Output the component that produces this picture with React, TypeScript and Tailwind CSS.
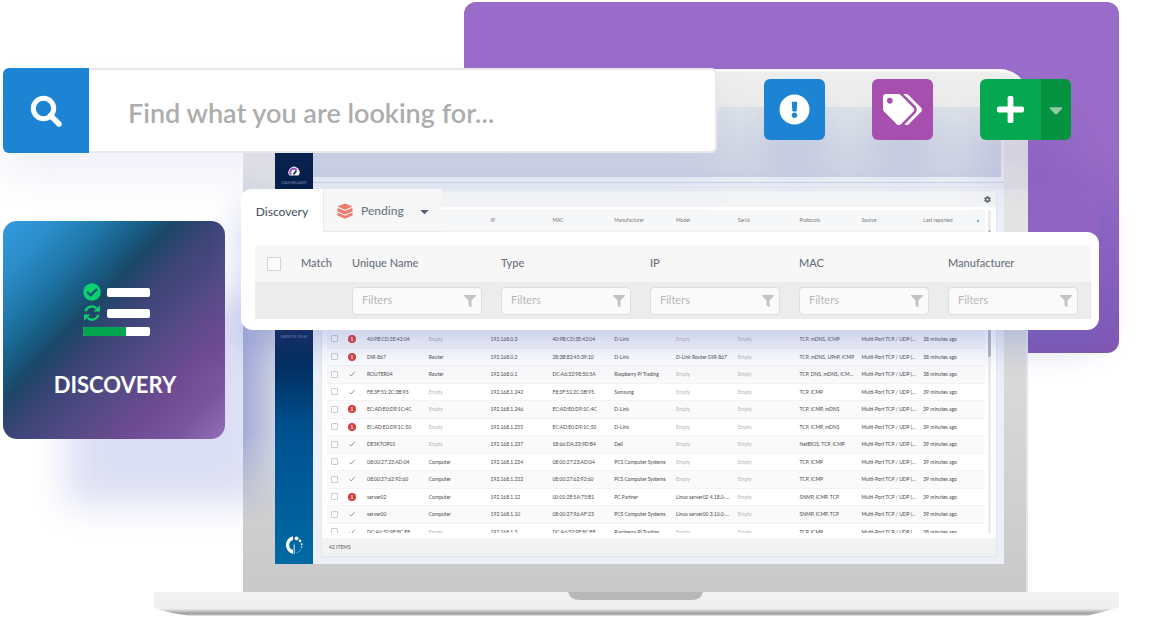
import React from "react";
import { FaCaretDown, FaCheckCircle, FaCog, FaExclamationCircle, FaFilter, FaPlus, FaTags } from "react-icons/fa";

type Device = {
  alert?: boolean;
  name: string;
  type?: string;
  ip: string;
  mac: string;
  maker: string;
  model?: string;
  protocols: string;
  seen: number;
};

const devices: Device[] = [
  { alert: true, name: "40:9B:CD:3E:42:04", ip: "192.168.0.3", mac: "40:9B:CD:3E:42:04", maker: "D-Link", protocols: "TCP, mDNS, ICMP", seen: 38 },
  { alert: true, name: "DIR-867", type: "Router", ip: "192.168.0.2", mac: "28:3B:82:45:39:10", maker: "D-Link", model: "D-Link Router DIR-867", protocols: "TCP, mDNS, UPnP, ICMP", seen: 38 },
  { name: "ROUTER04", type: "Router", ip: "192.168.0.1", mac: "DC:A6:32:98:50:5A", maker: "Raspberry Pi Trading", protocols: "TCP, DNS, mDNS, ICM...", seen: 38 },
  { name: "F8:3F:51:2C:3B:95", ip: "192.168.1.242", mac: "F8:3F:51:2C:3B:95", maker: "Samsung", protocols: "TCP, ICMP", seen: 39 },
  { alert: true, name: "EC:AD:E0:D9:1C:4C", ip: "192.168.1.246", mac: "EC:AD:E0:D9:1C:4C", maker: "D-Link", protocols: "TCP, ICMP, mDNS", seen: 39 },
  { alert: true, name: "EC:AD:E0:D9:1C:50", ip: "192.168.1.255", mac: "EC:AD:E0:D9:1C:50", maker: "D-Link", protocols: "TCP, ICMP, mDNS", seen: 39 },
  { name: "DESKTOP01", ip: "192.168.1.237", mac: "18:66:DA:33:9D:B4", maker: "Dell", protocols: "NetBIOS, TCP, ICMP", seen: 39 },
  { name: "08:00:27:23:AD:04", type: "Computer", ip: "192.168.1.224", mac: "08:00:27:23:AD:04", maker: "PCS Computer Systems", protocols: "TCP, ICMP", seen: 39 },
  { name: "08:00:27:62:92:60", type: "Computer", ip: "192.168.1.222", mac: "08:00:27:62:92:60", maker: "PCS Computer Systems", protocols: "TCP, ICMP", seen: 39 },
  { alert: true, name: "server02", type: "Computer", ip: "192.168.1.12", mac: "00:01:2E:5A:75:B1", maker: "PC Partner", model: "Linux server02 4.18.0-...", protocols: "SNMP, ICMP, TCP", seen: 39 },
  { name: "server00", type: "Computer", ip: "192.168.1.10", mac: "08:00:27:96:AF:23", maker: "PCS Computer Systems", model: "Linux server00 3.10.0-...", protocols: "SNMP, ICMP, TCP", seen: 39 },
  { name: "DC:A6:32:9F:8C:F8", ip: "192.168.1.3", mac: "DC:A6:32:9F:8C:F8", maker: "Raspberry Pi Trading", protocols: "TCP, ICMP", seen: 38 },
];

const heads = ["IP", "MAC", "Manufacturer", "Model", "Serial", "Protocols", "Source", "Last reported"];
const filters = ["Unique Name", "Type", "IP", "MAC", "Manufacturer"];

const Value = ({ text }: { text?: string }) =>
  text ? <td className="whitespace-nowrap">{text}</td> : <td className="text-[#b5b5b5]">Empty</td>;

function DeviceTable() {
  return (
    <table className="w-full table-fixed border-collapse text-left text-[5px] leading-[6px] text-[#4a4a4a]">
      <colgroup>
        <col className="w-[18px]" />
        <col className="w-[22px]" />
      </colgroup>
      <thead>
        <tr className="h-5 bg-[#f6f7f9] text-[#777]">
          <th colSpan={4}></th>
          {heads.map((h) => (
            <th key={h} className="font-normal whitespace-nowrap">
              {h}
              {h === "Last reported" && <span className="ml-6 inline-block size-[2px] rounded-full bg-[#3a8fd6] align-middle" />}
            </th>
          ))}
        </tr>
        <tr className="h-[100px] bg-[#f1f1f1]">
          <td colSpan={12}></td>
        </tr>
      </thead>
      <tbody>
        {devices.map((d) => (
          <tr key={d.name} className="h-[17px] border-b border-[#f3f3f3] odd:h-[18px] odd:bg-[#fafafa]">
            <td className="pl-1">
              <input type="checkbox" aria-label={d.name} className="block size-[7px] appearance-none rounded-[1px] border border-[#cbcbd0] bg-white" />
            </td>
            <td className="pl-[3px]">
              {d.alert ? (
                <span className="flex size-2 items-center justify-center rounded-full bg-[#d93a3a] text-[5px] font-bold text-white">1</span>
              ) : (
                <svg viewBox="0 0 8 8" className="size-2 fill-none stroke-[#9a9a9a]">
                  <path d="M1.500 4.200 3.200 6 6.800 1.800" />
                </svg>
              )}
            </td>
            <Value text={d.name} />
            <Value text={d.type} />
            <Value text={d.ip} />
            <Value text={d.mac} />
            <Value text={d.maker} />
            <Value text={d.model} />
            <Value />
            <Value text={d.protocols} />
            <td className="whitespace-nowrap">Multi-Port TCP / UDP (...</td>
            <td className="whitespace-nowrap">{d.seen} minutes ago</td>
          </tr>
        ))}
      </tbody>
    </table>
  );
}

function Logo() {
  return (
    <svg viewBox="0 0 20 20" className="size-5" aria-label="Logo">
      <path d="M9 1.200A9 9 0 0 0 9 18.800V15A5.200 5.200 0 0 1 9 5Z" fill="#fff" />
      <path d="M10.200 9.500V19" stroke="#b9d6ee" strokeWidth="1.200" />
      <circle cx="12.500" cy="3.300" r="1.900" fill="#fff" />
      <circle cx="16" cy="5.800" r="1.400" fill="#fff" />
      <circle cx="17.600" cy="9.200" r="1" fill="#fff" />
      <circle cx="17.600" cy="12" r=".8" fill="#fff" />
      <path d="M17 14a8 8 0 0 1-4.500 4" stroke="#5b9acb" strokeWidth="1" fill="none" />
    </svg>
  );
}

function Laptop() {
  return (
    <section className="relative mr-[33px] ml-[154px]">
      <div className="relative mr-[91px] ml-[89px] rounded-tl-[28px] rounded-tr-[28px] border-t-[3px] border-r-2 border-t-[#f8f8fa] border-r-[#e4e5ea] bg-linear-to-b from-[#eeeeee] via-[#dddddd] to-[#c9c9c9] pt-[35px] pr-[22px] pb-7 pl-8">
        <div className="absolute top-0 bottom-[70px] left-0 w-8 bg-linear-to-r from-[#a3abd6] to-[#ccd0e2] mask-linear-[to_bottom,transparent_20%,black_60%,black_80%,transparent]" />
        <div className="flex bg-[#ecf0f6]">
          <nav className="flex w-[38px] shrink-0 flex-col items-center bg-linear-to-b from-[#001a44] from-48% via-[#00508f] via-70% to-[#0169a4] text-[4px] leading-[5px] text-[#7d86ad]">
            <a href="#dashboard" className="mt-[58px] flex flex-col items-center gap-[3px]">
              <svg viewBox="0 0 14 12" className="h-3 w-[14px] fill-none">
                <path d="M2.500 10.500A5.500 5.500 0 1 1 11.500 10.500Z" fill="#fff" />
                <path d="M4 9.500A3.500 3.500 0 1 1 9.500 5" stroke="#a04fc0" strokeWidth="2" />
                <path d="M6.500 9.500 9.500 5.500" stroke="#14244f" strokeWidth="1.500" />
              </svg>
              DASHBOARD
            </a>
            <a href="#service" className="mt-[149px]">SERVICE DESK</a>
            <span className="mt-auto mb-[9px]">
              <Logo />
            </span>
          </nav>
          <div className="min-w-0 flex-1">
            <div className="mr-[3px] h-[70px] bg-linear-to-b from-[#dce1e8] to-[#cdd2e4]" />
            <div className="mt-[5px] h-px bg-[#cdd5e6]" />
            <div className="mt-[7px] mr-[7px] mb-[7px] ml-2 border border-[#e3e7ee] bg-white">
              <div className="flex h-4 items-center justify-end bg-[#f3f4f6] pr-[5px]">
                <button type="button" aria-label="Table settings" className="text-[7px] text-[#5d6470]">
                  <FaCog />
                </button>
              </div>
              <div className="mt-[3px] flex h-[323px] overflow-hidden pl-[5px]">
                <div className="min-w-0 flex-1">
                  <DeviceTable />
                </div>
                <div className="mr-[5px] ml-[3px] w-[3px] bg-[#ececec]">
                  <div className="mt-5 h-[127px] rounded-full bg-[#b5b7bd]" />
                </div>
              </div>
              <div className="mt-[5px] h-[18px] bg-[#f2f2f2] pl-[7px] text-[5px] leading-[18px] text-[#555]">42 ITEMS</div>
            </div>
          </div>
        </div>
      </div>
      <svg viewBox="0 0 965 24" preserveAspectRatio="none" className="block h-6 w-full">
        <defs>
          <linearGradient id="base" x2="0" y2="1">
            <stop offset="0" stopColor="#f3f3f3" />
            <stop offset=".7" stopColor="#eeeeee" />
            <stop offset=".78" stopColor="#d2d2d2" />
            <stop offset=".9" stopColor="#a2a2a2" />
            <stop offset="1" stopColor="#b9bac0" />
          </linearGradient>
        </defs>
        <path d="M0 0H965V15Q950 20 934 23.500H34Q12 21 0 15Z" fill="url(#base)" />
        <path d="M414 0H549Q547 8 538 8H426Q416 8 414 0Z" fill="#b8b8b8" />
      </svg>
    </section>
  );
}

function DiscoveryCard() {
  return (
    <a href="#discovery" className="absolute top-[221px] left-[3px] flex h-[218px] w-[222px] flex-col items-center rounded-[14px] bg-[linear-gradient(134deg,#339ade_0%,#2b8ecb_12%,#1f76a8_24%,#175a80_34%,#1c4768_40%,#3a4475_49%,#524a84_62%,#6d4a92_76%,#7a569f_88%,#9470b8_100%)] pt-[62px] text-white">
      <span className="ml-1 flex w-[67px] flex-col gap-[3px]">
        <span className="flex items-center justify-between">
          <FaCheckCircle className="size-[18px] text-[#0ccf70]" />
          <span className="h-[9px] w-[43px] rounded-[2px] bg-white" />
        </span>
        <span className="flex items-center justify-between">
          <svg viewBox="0 0 18 18" className="size-[18px] fill-[#0ccf70]">
            <path d="M2.600 7.200A6.600 6.600 0 0 1 13.500 4.200" fill="none" stroke="#0ccf70" strokeWidth="2.300" />
            <path d="M17 1.200V7.600H10.600Z" />
            <path d="M15.400 10.800A6.600 6.600 0 0 1 4.500 13.800" fill="none" stroke="#0ccf70" strokeWidth="2.300" />
            <path d="M1 16.800V10.400H7.400Z" />
          </svg>
          <span className="h-[9px] w-[43px] rounded-[2px] bg-white" />
        </span>
        <span className="mt-[2px] flex h-[9px] overflow-hidden rounded-[2px] bg-white">
          <span className="w-[43px] bg-[#06a651]" />
        </span>
      </span>
      <span className="mt-[35px] ml-[2px] text-[22px] leading-7 font-bold">DISCOVERY</span>
    </a>
  );
}

function SearchBar() {
  return (
    <form className="absolute top-[68px] left-[3px] flex h-[85px] w-[714px] overflow-hidden rounded-md bg-white shadow-[0_24px_40px_rgba(110,120,200,0.1)]">
      <button type="button" aria-label="Search" className="flex w-[86px] shrink-0 items-center justify-center bg-[#1d84d3]">
        <svg viewBox="0 0 34 34" className="size-[34px] fill-none stroke-white">
          <circle cx="14.500" cy="14.500" r="10.200" strokeWidth="5" />
          <path d="M21.500 21.500 30 30" strokeWidth="5.500" strokeLinecap="round" />
        </svg>
      </button>
      <input
        aria-label="Search text"
        placeholder="Find what you are looking for..."
        className="min-w-0 flex-1 rounded-r-md border-2 border-l-0 border-[#e8e8ea] pt-[5px] pl-[39px] text-[27px] font-semibold outline-none placeholder:text-[#adadad]"
      />
    </form>
  );
}

function Actions() {
  return (
    <div className="absolute top-[79px] left-[764px] flex gap-[47px] text-white">
      <button type="button" aria-label="Alerts" className="flex size-[61px] items-center justify-center rounded-md bg-[#1d84d3] text-[31px] shadow-[0_30px_30px_rgba(80,90,180,0.1)]">
        <FaExclamationCircle />
      </button>
      <button type="button" aria-label="Tags" className="flex size-[61px] items-center justify-center rounded-md bg-[#a64fae] text-[39px] shadow-[0_30px_30px_rgba(80,90,180,0.1)]">
        <FaTags />
      </button>
      <div className="flex h-[61px] overflow-hidden rounded-md shadow-[0_40px_40px_rgba(80,60,170,0.15)]">
        <button type="button" aria-label="Add" className="flex w-[61px] items-center justify-center bg-[#05a750] text-[31px]">
          <FaPlus />
        </button>
        <button type="button" aria-label="More options" className="flex w-[30px] items-center justify-center bg-[#059341] text-[22px] text-[#93c9a4]">
          <FaCaretDown />
        </button>
      </div>
    </div>
  );
}

function FilterPanel() {
  return (
    <section className="absolute top-[189px] right-[53px] left-[241px] rounded-[12px] shadow-[0_16px_34px_rgba(90,105,200,0.3)]">
      <div className="flex h-[43px] w-[200px] overflow-hidden rounded-tl-[10px] bg-white text-[12px] font-medium text-[#4d5968]">
        <button type="button" className="w-[82px] pt-[2px]">Discovery</button>
        <button type="button" className="flex flex-1 items-center border-b border-l border-[#e9e9e9] bg-[#f7f7f8] pt-[2px] pl-[13px] text-[#6b7380]">
          <svg viewBox="0 0 16 16" className="mr-2 size-4 fill-[#ee7b69]">
            <path d="M8 .5 15.500 3.600 8 6.800.5 3.600Z" />
            <path d="M.5 4.700 8 7.900l7.500-3.200v3.700L8 11.600.5 8.400Z" />
            <path d="M.5 9.500 8 12.700l7.500-3.200v3L8 15.700.5 12.500Z" />
          </svg>
          Pending
          <FaCaretDown className="ml-[14px] size-[13px] text-[#566272]" />
        </button>
      </div>
      <div className="rounded-[12px] rounded-tl-none bg-white pt-[13px] pr-2 pb-[11px] pl-[14px]">
        <table className="w-full table-fixed border-collapse text-left text-[11px] text-[#69717c]">
          <colgroup>
            <col className="w-[46px]" />
            <col className="w-[51px]" />
            <col className="w-[149px]" />
            <col className="w-[149px]" />
            <col className="w-[149px]" />
            <col className="w-[149px]" />
            <col />
          </colgroup>
          <thead>
            <tr className="h-[37px] bg-[#f7f7f7]">
              <th className="pl-3">
                <input type="checkbox" aria-label="Select all" className="block size-[14px] appearance-none border border-[#d3d3d3] bg-[#fbfbfb]" />
              </th>
              <th className="font-medium">Match</th>
              {filters.map((f) => (
                <th key={f} className="font-medium">{f}</th>
              ))}
            </tr>
          </thead>
          <tbody>
            <tr className="h-[37px] bg-[#ececec]">
              <td colSpan={2}></td>
              {filters.map((f) => (
                <td key={f}>
                  <label className="flex h-7 w-[130px] items-center rounded-[4px] border border-[#dedede] bg-[#fafafa] pr-[5px] pl-[9px]">
                    <input aria-label={`${f} filter`} placeholder="Filters" className="min-w-0 flex-1 outline-none placeholder:text-[#b8b8b8]" />
                    <FaFilter className="size-3 text-[#c2c2c2]" />
                  </label>
                </td>
              ))}
            </tr>
          </tbody>
        </table>
      </div>
    </section>
  );
}

export default function App() {
  return (
    <main className="relative min-h-[627px] overflow-hidden bg-white pt-[69px] font-['Lato',sans-serif]">
      <div className="absolute top-[2px] right-[33px] left-[464px] h-[351px] rounded-[12px] bg-linear-to-b from-[#9a6cc9] from-40% to-[#8157b4]" />
      <div className="absolute top-[300px] left-[66px] h-[205px] w-[200px] bg-[#dcdef4] blur-[18px]" />
      <Laptop />
      <SearchBar />
      <Actions />
      <DiscoveryCard />
      <FilterPanel />
    </main>
  );
}
